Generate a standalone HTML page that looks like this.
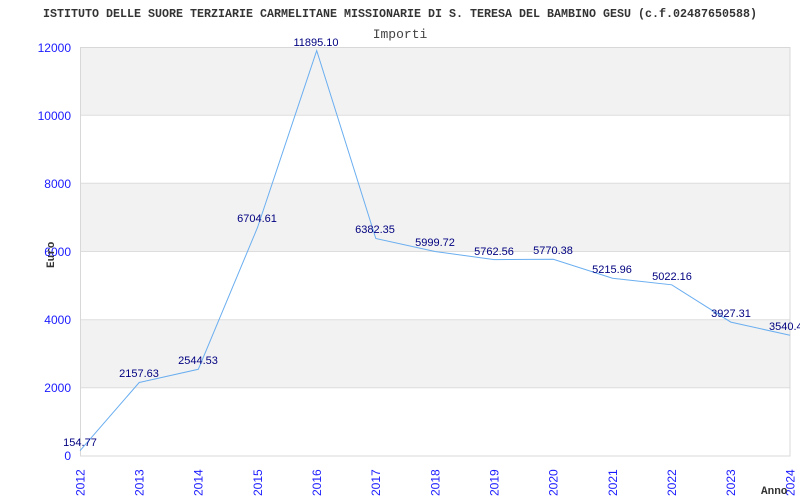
<!DOCTYPE html>
<html><head><style>body{margin:0;background:#fff}svg{display:block}</style></head><body>
<svg width="800" height="500" xmlns="http://www.w3.org/2000/svg">
<rect width="800" height="500" fill="#fff"/>
<text x="43" y="17" textLength="714" lengthAdjust="spacingAndGlyphs" font-family="Liberation Mono, monospace" font-weight="bold" font-size="11.5" fill="#333">ISTITUTO DELLE SUORE TERZIARIE CARMELITANE MISSIONARIE DI S. TERESA DEL BAMBINO GESU (c.f.02487650588)</text>
<text x="400" y="38" text-anchor="middle" font-family="Liberation Mono, monospace" font-size="13" fill="#444">Importi</text>
<rect x="80" y="47" width="710" height="68.2" fill="#f2f2f2"/>
<rect x="80" y="183.3" width="710" height="68.2" fill="#f2f2f2"/>
<rect x="80" y="319.7" width="710" height="68.2" fill="#f2f2f2"/>
<g stroke="#ddd" stroke-width="1">
<line x1="80" y1="115.2" x2="790" y2="115.2"/><line x1="80" y1="183.3" x2="790" y2="183.3"/>
<line x1="80" y1="251.5" x2="790" y2="251.5"/><line x1="80" y1="319.7" x2="790" y2="319.7"/>
<line x1="80" y1="387.8" x2="790" y2="387.8"/>
</g>
<rect x="80.5" y="47.5" width="709.5" height="408.5" fill="none" stroke="#d8d8d8"/>
<g font-family="Liberation Sans, sans-serif" font-size="12" fill="#1a1aff" text-anchor="end">
<text x="71" y="52">12000</text><text x="71" y="120">10000</text><text x="71" y="188">8000</text>
<text x="71" y="256">6000</text><text x="71" y="324">4000</text><text x="71" y="392">2000</text><text x="71" y="460">0</text>
</g>
<polyline fill="none" stroke="#6aaef0" stroke-width="1" points="80,450.7 139.2,382.5 198.3,369.3 257.5,227.5 316.7,50.6 375.8,238.5 435,251.5 494.2,259.6 553.3,259.3 612.5,278.2 671.7,284.8 730.8,322.1 790,335.3"/>
<g font-family="Liberation Sans, sans-serif" font-size="11" fill="#000080" text-anchor="middle">
<text x="80" y="446">154.77</text><text x="139" y="377">2157.63</text><text x="198" y="364">2544.53</text>
<text x="257" y="222">6704.61</text><text x="316" y="46">11895.10</text><text x="375" y="233">6382.35</text>
<text x="435" y="246">5999.72</text><text x="494" y="255">5762.56</text><text x="553" y="254">5770.38</text>
<text x="612" y="273">5215.96</text><text x="672" y="280">5022.16</text><text x="731" y="317">3927.31</text>
<text x="769" y="330" text-anchor="start">3540.4</text>
</g>
<g font-family="Liberation Sans, sans-serif" font-size="12" fill="#1a1aff">
<text transform="translate(84.5,496) rotate(-90)">2012</text>
<text transform="translate(143.5,496) rotate(-90)">2013</text>
<text transform="translate(202.5,496) rotate(-90)">2014</text>
<text transform="translate(262,496) rotate(-90)">2015</text>
<text transform="translate(321,496) rotate(-90)">2016</text>
<text transform="translate(380,496) rotate(-90)">2017</text>
<text transform="translate(439.5,496) rotate(-90)">2018</text>
<text transform="translate(498.5,496) rotate(-90)">2019</text>
<text transform="translate(557.5,496) rotate(-90)">2020</text>
<text transform="translate(617,496) rotate(-90)">2021</text>
<text transform="translate(676,496) rotate(-90)">2022</text>
<text transform="translate(735,496) rotate(-90)">2023</text>
<text transform="translate(794.5,496) rotate(-90)">2024</text>
</g>
<text transform="translate(54,268) rotate(-90)" font-family="Liberation Mono, monospace" font-weight="bold" font-size="11" fill="#333">Euro</text>
<text x="761" y="494" font-family="Liberation Mono, monospace" font-weight="bold" font-size="11" fill="#333">Anno</text>
</svg>
</body></html>
